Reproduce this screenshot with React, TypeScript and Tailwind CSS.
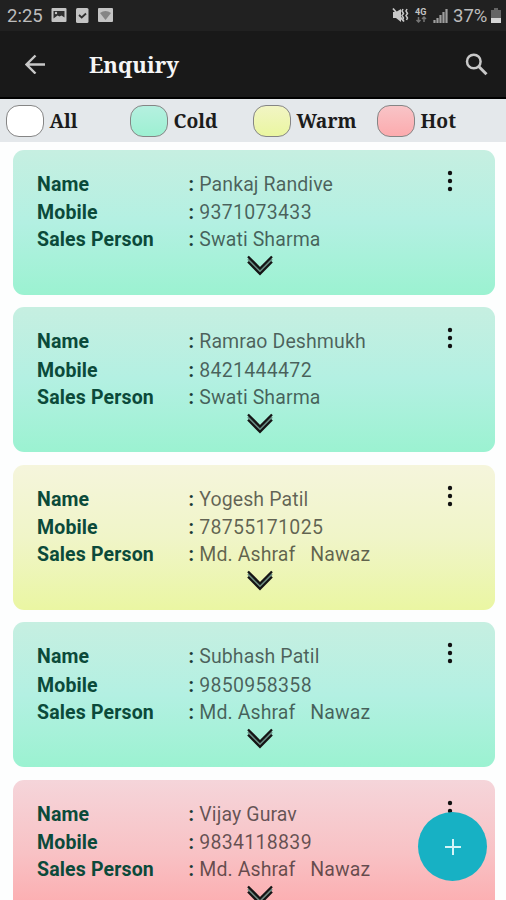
import clsx from 'clsx'

type Status = 'all' | 'cold' | 'warm' | 'hot'

type Enquiry = {
  name: string
  mobile: string
  salesPerson: string
  status: Status
}

const backgrounds: Record<Status, string> = {
  all: 'bg-white',
  cold: 'bg-linear-to-b from-[#c6efe1] via-[#b3f0e2] to-[#9bf2d1]',
  warm: 'bg-linear-to-b from-[#f5f5dc] via-[#f0f5c8] to-[#eaf6a2]',
  hot: 'bg-linear-to-b from-[#f5d5da] via-[#f8c2c5] to-[#fda6a9]',
}

const swatches: Record<Status, string> = {
  all: 'bg-white',
  cold: 'bg-linear-to-b from-[#b5f0e0] to-[#9df0d2]',
  warm: 'bg-linear-to-b from-[#f2f5c4] to-[#eaf6a0]',
  hot: 'bg-linear-to-b from-[#f8c4c7] to-[#fcabae]',
}

const filters: { label: string; status: Status; width: string }[] = [
  { label: 'All', status: 'all', width: 'w-[124px]' },
  { label: 'Cold', status: 'cold', width: 'w-[123px]' },
  { label: 'Warm', status: 'warm', width: 'w-[124px]' },
  { label: 'Hot', status: 'hot', width: 'w-[123px]' },
]

const enquiries: Enquiry[] = [
  { name: 'Pankaj Randive', mobile: '9371073433', salesPerson: 'Swati Sharma', status: 'cold' },
  { name: 'Ramrao Deshmukh', mobile: '8421444472', salesPerson: 'Swati Sharma', status: 'cold' },
  { name: 'Yogesh Patil', mobile: '78755171025', salesPerson: 'Md. Ashraf   Nawaz', status: 'warm' },
  { name: 'Subhash Patil', mobile: '9850958358', salesPerson: 'Md. Ashraf   Nawaz', status: 'cold' },
  { name: 'Vijay Gurav', mobile: '9834118839', salesPerson: 'Md. Ashraf   Nawaz', status: 'hot' },
]

function StatusBar() {
  return (
    <div className="flex h-[31px] shrink-0 items-center bg-[#212121] pl-[7px] pr-[5px] text-[#bdbdbd]">
      <span className="w-[44px] pt-px text-[18.5px] leading-none">2:25</span>
      <svg className="h-[15px] w-[63px]" viewBox="0 0 63 15">
        <rect x="0.5" y="0" width="15" height="14" rx="1" fill="#c4c4c4" />
        <path d="M2.5 3h11v6.500l-3-2-2 1-2-1-4 3z" fill="#303030" />
        <circle cx="5" cy="5" r="1.2" fill="#c4c4c4" />
        <rect x="25" y="0" width="12.500" height="15" rx="1.500" fill="#c4c4c4" />
        <path d="M28 7l2.700 2.500 4.300-4" fill="none" stroke="#303030" strokeWidth="1.800" />
        <rect x="47" y="0" width="15" height="14" rx="1" fill="#c4c4c4" />
        <path d="M49 5q5.500-4 11 0l-5.500 7z" fill="#858585" />
      </svg>
      <svg className="ml-auto h-[18px] w-[56px]" viewBox="0 0 56 18">
        <path d="M1 5h3l5-3v13l-5-4H1z" fill="#c9c9c9" />
        <path d="M1 1.500l11 13" stroke="#c9c9c9" strokeWidth="1.800" />
        <path d="M11 2l-1 2 1.500 2.500-1.500 2 1.500 2.500-1 2M15 2l-1 2 1.500 2.500-1.500 2 1.500 2.500-1 2" fill="none" stroke="#c9c9c9" strokeWidth="1.500" />
        <text x="23" y="8" fontSize="9" fontWeight="700" fill="#c4c4c4">4G</text>
        <path d="M26.500 10v5m-2-2l2 2 2-2M32 15v-5m-2 2l2-2 2 2" fill="none" stroke="#757575" strokeWidth="1.500" />
        <path d="M42.500 16v-3M45.500 16v-5M48.500 16V8M51.500 16V5M54.500 16V2" stroke="#9e9e9e" strokeWidth="2.200" />
      </svg>
      <span className="ml-[5px] w-[38px] pt-px text-[18.5px] leading-none">37%</span>
      <svg className="h-[16px] w-[10px]" viewBox="0 0 10 16">
        <path d="M3 0h4v2h3v8H0V2h3z" fill="#656565" />
        <path d="M0 10h10v5H0z" fill="#d5d5d5" />
      </svg>
    </div>
  )
}

function Toolbar() {
  return (
    <header className="flex h-[68px] shrink-0 items-center border-b-2 border-black bg-[#191919] pl-[25px] pr-[18px]">
      <button aria-label="Back">
        <svg className="h-5 w-5" viewBox="0 0 20 20" fill="none" stroke="#c8c8c8" strokeWidth="2.400">
          <path d="M20 10.500H2M10.500 1.500L1.500 10.500l9 9" />
        </svg>
      </button>
      <h1 className="ml-[44px] pt-px font-['Noto_Serif','DejaVu_Serif_Condensed','DejaVu_Serif',serif] text-[22px] font-bold text-[#f5f5f5]">
        Enquiry
      </h1>
      <button aria-label="Search" className="ml-auto">
        <svg className="h-[23px] w-[23px]" viewBox="0 0 23 23" fill="none" stroke="#c8c8c8">
          <circle cx="8.800" cy="8.500" r="6.800" strokeWidth="2.500" />
          <path d="M13.500 13.200l8 8" strokeWidth="3" />
        </svg>
      </button>
    </header>
  )
}

function FilterBar() {
  return (
    <div className="flex h-[43px] shrink-0 items-center bg-[#e4e8eb] pl-[6px]">
      {filters.map(({ label, status, width }) => (
        <button key={label} className={clsx('flex shrink-0 items-center', width)}>
          <span className={clsx('h-[32px] w-[38px] rounded-[13px] border border-[#858585]', swatches[status])} />
          <span className="ml-[5.500px] font-['Noto_Serif','DejaVu_Serif_Condensed','DejaVu_Serif',serif] text-[19.300px] font-bold leading-none text-[#1c1c1c]">
            {label}
          </span>
        </button>
      ))}
    </div>
  )
}

function Field({ label, value, wide }: { label: string; value: string; wide?: boolean }) {
  return (
    <div className="flex items-baseline whitespace-pre leading-[27px]">
      <span className="w-[151.500px] text-[19.500px] font-bold tracking-[0.15px] text-[#0b4a3a]">{label}</span>
      <span className="w-[10.800px] text-[19.500px] font-bold text-[#1d3a34]">:</span>
      <span className={clsx('text-[19.500px] text-black/60', wide ? 'tracking-[0.3px]' : 'tracking-[0.1px]')}>{value}</span>
    </div>
  )
}

function EnquiryCard({ enquiry }: { enquiry: Enquiry }) {
  return (
    <article className={clsx('flex h-[145px] shrink-0 rounded-[11px] pl-[24.500px] pr-[41.500px] pt-[20px]', backgrounds[enquiry.status])}>
      <div className="flex-1 pt-px">
        <Field label="Name" value={enquiry.name} />
        <div className="pt-[1.500px]">
          <Field label="Mobile" value={enquiry.mobile} wide />
        </div>
        <Field label="Sales Person" value={enquiry.salesPerson} />
        <svg className="ml-[209.500px] mt-[2px] h-[21px] w-[26px]" viewBox="0 0 26 21" fill="none" stroke="#151515" strokeWidth="2.300">
          <path d="M1 4l12 12L25 4" stroke="#6b8f86" strokeWidth="2" />
          <path d="M1 1.500l12 12 12-12M1 6.800l12 12 12-12" />
        </svg>
      </div>
      <button aria-label="More options" className="h-[22px] w-[6px]">
        <svg className="h-[22px] w-[6px]" viewBox="0 0 6 22" fill="#111">
          <circle cx="3" cy="3" r="2.200" />
          <circle cx="3" cy="11" r="2.200" />
          <circle cx="3" cy="19" r="2.200" />
        </svg>
      </button>
    </article>
  )
}

export default function App() {
  return (
    <div className="relative flex h-[900px] w-[506px] flex-col overflow-hidden bg-[#fdfefe] font-[Roboto,sans-serif]">
      <StatusBar />
      <Toolbar />
      <FilterBar />
      <main className="flex min-h-0 flex-1 flex-col gap-[12.500px] overflow-hidden pl-[12.500px] pr-[11.500px] pt-[7.700px]">
        {enquiries.map((enquiry) => (
          <EnquiryCard key={enquiry.mobile} enquiry={enquiry} />
        ))}
      </main>
      <button
        aria-label="Add enquiry"
        className="absolute bottom-[19px] right-[19px] flex h-[69px] w-[69px] items-center justify-center rounded-full bg-[#17b1c4]"
      >
        <svg className="h-4 w-4" viewBox="0 0 16 16" stroke="#d5f4f7" strokeWidth="2">
          <path d="M8 0v16M0 8h16" />
        </svg>
      </button>
    </div>
  )
}
